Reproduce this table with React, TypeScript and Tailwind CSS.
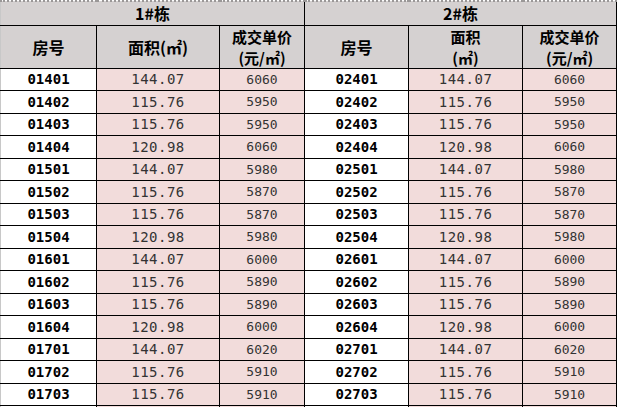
const rows: [string, string, string][] = [
  ["401", "144.07", "6060"],
  ["402", "115.76", "5950"],
  ["403", "115.76", "5950"],
  ["404", "120.98", "6060"],
  ["501", "144.07", "5980"],
  ["502", "115.76", "5870"],
  ["503", "115.76", "5870"],
  ["504", "120.98", "5980"],
  ["601", "144.07", "6000"],
  ["602", "115.76", "5890"],
  ["603", "115.76", "5890"],
  ["604", "120.98", "6000"],
  ["701", "144.07", "6020"],
  ["702", "115.76", "5910"],
  ["703", "115.76", "5910"],
];

const cjk = "font-['Noto_Sans_CJK_SC',sans-serif]";
const mono = "font-['DejaVu_Sans_Mono',monospace]";

function HeadCell({
  children,
  className = "",
  colSpan,
}: {
  children: React.ReactNode;
  className?: string;
  colSpan?: number;
}) {
  return (
    <td
      colSpan={colSpan}
      className={`border-r border-b border-black bg-[#d5d1d1] p-0 text-center align-middle font-bold text-black ${cjk} ${className}`}
    >
      {children}
    </td>
  );
}

// two-line header text, a bit tighter so the lines don't collide
function TwoLine({ top, bottom }: { top: string; bottom: string }) {
  return (
    <div className="text-[15px] leading-[21px]">
      <div>{top}</div>
      <div>{bottom}</div>
    </div>
  );
}

function IdCell({ id, first }: { id: string; first?: boolean }) {
  return (
    <td
      className={`border-r border-b border-black bg-white p-0 text-center align-middle text-[14px] leading-none font-bold text-black ${mono} ${
        first ? "border-l border-l-[#c8c8c8]" : ""
      }`}
    >
      {id}
    </td>
  );
}

function NumCell({ value, size }: { value: string; size: string }) {
  return (
    <td
      className={`border-r border-b border-black bg-[#f2dcdb] p-0 text-center align-middle leading-none text-[#333] ${mono} ${size}`}
    >
      {value}
    </td>
  );
}

export default function App() {
  return (
    <div className="h-[407px] w-[619px] overflow-hidden bg-white">
      <table className="w-[616px] table-fixed border-collapse">
        <colgroup>
          <col className="w-[96px]" />
          <col className="w-[123px]" />
          <col className="w-[85px]" />
          <col className="w-[104px]" />
          <col className="w-[114px]" />
          <col className="w-[94px]" />
        </colgroup>
        <thead>
          <tr className="h-[24px]">
            <HeadCell
              colSpan={3}
              className="border-t-2 border-l border-t-[#9a9797] border-l-[#c8c8c8] text-[16px] leading-[20px] [border-top-style:dotted]"
            >
              1#栋
            </HeadCell>
            <HeadCell
              colSpan={3}
              className="border-t-2 border-t-[#9a9797] text-[16px] leading-[20px] [border-top-style:dotted]"
            >
              2#栋
            </HeadCell>
          </tr>
          <tr className="h-[43px]">
            <HeadCell className="border-l border-l-[#c8c8c8] text-[16px]">房号</HeadCell>
            <HeadCell className="text-[16px]">面积(㎡)</HeadCell>
            <HeadCell>
              <TwoLine top="成交单价" bottom="(元/㎡)" />
            </HeadCell>
            <HeadCell className="text-[16px]">房号</HeadCell>
            <HeadCell>
              <TwoLine top="面积" bottom="(㎡)" />
            </HeadCell>
            <HeadCell>
              <TwoLine top="成交单价" bottom="(元/㎡)" />
            </HeadCell>
          </tr>
        </thead>
        <tbody>
          {rows.map(([suffix, area, price], i) => (
            <tr key={suffix} className={i % 2 === 0 ? "h-[22px]" : "h-[23px]"}>
              <IdCell id={`01${suffix}`} first />
              <NumCell value={area} size="text-[14px] tracking-[0.5px]" />
              <NumCell value={price} size="text-[13px]" />
              <IdCell id={`02${suffix}`} />
              <NumCell value={area} size="text-[14px] tracking-[0.5px]" />
              <NumCell value={price} size="text-[13px]" />
            </tr>
          ))}
          {/* next row peeks in under the cut */}
          <tr className="h-[23px]">
            <IdCell id="" first />
            <NumCell value="" size="" />
            <NumCell value="" size="" />
            <IdCell id="" />
            <NumCell value="" size="" />
            <NumCell value="" size="" />
          </tr>
        </tbody>
      </table>
    </div>
  );
}
